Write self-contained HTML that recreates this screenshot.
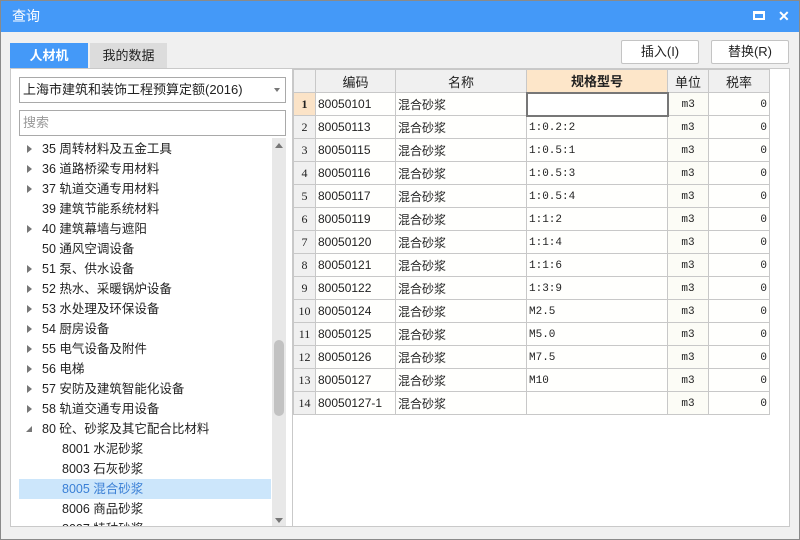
<!DOCTYPE html>
<html><head><meta charset="utf-8"><style>
*{margin:0;padding:0;box-sizing:border-box}
body{width:800px;height:540px;background:#f0f0f0;font-family:"Liberation Sans","Noto Sans CJK SC",sans-serif;font-size:12px;color:#222;position:relative;overflow:hidden}
.abs{position:absolute}
.frame{left:0;top:0;width:800px;height:540px;border:1px solid #8a8a8a;pointer-events:none}
.title{left:0;top:0;width:800px;height:32px;background:#4499f8;color:#fff;font-size:14px;line-height:32px;padding-left:12px}
.tab{top:43px;height:25px;line-height:25px;text-align:center;font-size:13px}
.left{left:10px;top:68px;width:283px;height:459px;background:#fff;border:1px solid #c9c9c9}
.inp{left:19px;width:267px;height:26px;border:1px solid #a9a9a9;background:#fff;line-height:24px;padding-left:3px;font-size:13px}
.tree>div{position:absolute;left:0;height:20px;line-height:20px;font-size:12.5px;width:252px}
.tri{position:absolute;left:8px;top:6px;width:0;height:0;border-left:5px solid #777;border-top:4px solid transparent;border-bottom:4px solid transparent}
.right{left:292px;top:68px;width:498px;height:459px;background:#fff;border:1px solid #c9c9c9}
.btn{top:40px;width:78px;height:24px;border:1px solid #c4c4c4;background:#fff;text-align:center;line-height:22px;font-size:13px;border-radius:2px}
table{position:absolute;left:0;top:0;border-collapse:collapse;table-layout:fixed}
td,th{border:1px solid #c8c8c8;height:23px;font-weight:normal;font-size:12px;white-space:nowrap;overflow:hidden;padding:0 2px;vertical-align:middle}
th{background:#f0f0f0;font-size:13px;height:23px}
td.n{background:#f0f0f0;text-align:center;font-family:"Liberation Serif",serif}
td.m{font-family:"Liberation Mono",monospace;font-size:11px;padding-top:2px}
td.u{background:#fcfcf6;text-align:center;font-family:"Liberation Mono",monospace;font-size:11px;padding-top:2px}
td.r{text-align:right;font-family:"Liberation Mono",monospace;font-size:11px;padding-top:2px}
td{background:#fffffd}
</style></head><body>
<div class="abs title">查询
<div class="abs" style="left:753px;top:11px;width:12px;height:9px;border:2px solid #fff;border-top-width:3px"></div>
<div class="abs" style="left:778px;top:0;font-size:14px;font-weight:bold">✕</div>
</div>
<div class="abs tab" style="left:10px;width:78px;background:#4499f8;color:#fff;font-weight:bold">人材机</div>
<div class="abs tab" style="left:90px;width:77px;background:#dcdcdc;">我的数据</div>
<div class="abs btn" style="left:621px">插入(I)</div>
<div class="abs btn" style="left:711px">替换(R)</div>
<div class="abs left"></div>
<div class="abs inp" style="top:77px">上海市建筑和装饰工程预算定额(2016)<span class="abs" style="right:5px;top:10px;border-top:4px solid #777;border-left:3px solid transparent;border-right:3px solid transparent"></span></div>
<div class="abs inp" style="top:110px;color:#999">搜索</div>
<div class="abs" style="left:272px;top:138px;width:14px;height:388px;background:#e8e8e8"></div>
<div class="abs" style="left:274px;top:340px;width:10px;height:76px;background:#c2c2c2;border-radius:5px"></div>
<div class="abs" style="left:275px;top:143px;border-bottom:5px solid #777;border-left:4px solid transparent;border-right:4px solid transparent"></div>
<div class="abs" style="left:275px;top:518px;border-top:5px solid #777;border-left:4px solid transparent;border-right:4px solid transparent"></div>
<div class="abs tree" style="left:19px;top:139px;width:253px;height:387px;overflow:hidden">
<div style="top:0"><span class="tri"></span><span style="margin-left:23px">35 周转材料及五金工具</span></div>
<div style="top:20px"><span class="tri"></span><span style="margin-left:23px">36 道路桥梁专用材料</span></div>
<div style="top:40px"><span class="tri"></span><span style="margin-left:23px">37 轨道交通专用材料</span></div>
<div style="top:60px"><span style="margin-left:23px">39 建筑节能系统材料</span></div>
<div style="top:80px"><span class="tri"></span><span style="margin-left:23px">40 建筑幕墙与遮阳</span></div>
<div style="top:100px"><span style="margin-left:23px">50 通风空调设备</span></div>
<div style="top:120px"><span class="tri"></span><span style="margin-left:23px">51 泵、供水设备</span></div>
<div style="top:140px"><span class="tri"></span><span style="margin-left:23px">52 热水、采暖锅炉设备</span></div>
<div style="top:160px"><span class="tri"></span><span style="margin-left:23px">53 水处理及环保设备</span></div>
<div style="top:180px"><span class="tri"></span><span style="margin-left:23px">54 厨房设备</span></div>
<div style="top:200px"><span class="tri"></span><span style="margin-left:23px">55 电气设备及附件</span></div>
<div style="top:220px"><span class="tri"></span><span style="margin-left:23px">56 电梯</span></div>
<div style="top:240px"><span class="tri"></span><span style="margin-left:23px">57 安防及建筑智能化设备</span></div>
<div style="top:260px"><span class="tri"></span><span style="margin-left:23px">58 轨道交通专用设备</span></div>
<div style="top:280px"><span class="abs" style="left:7px;top:7px;border-bottom:6px solid #777;border-left:6px solid transparent"></span><span style="margin-left:23px">80 砼、砂浆及其它配合比材料</span></div>
<div style="top:300px"><span style="margin-left:43px">8001 水泥砂浆</span></div>
<div style="top:320px"><span style="margin-left:43px">8003 石灰砂浆</span></div>
<div style="top:340px;background:#cce6fb;color:#3a7fd5"><span style="margin-left:43px">8005 混合砂浆</span></div>
<div style="top:360px"><span style="margin-left:43px">8006 商品砂浆</span></div>
<div style="top:380px"><span style="margin-left:43px">8007 特种砂浆</span></div>
</div>
<div class="abs right">
<table>
<colgroup><col style="width:22px"><col style="width:80px"><col style="width:131px"><col style="width:141px"><col style="width:41px"><col style="width:61px"></colgroup>
<tr><th></th><th>编码</th><th>名称</th><th style="background:#fde6c9;font-weight:bold">规格型号</th><th>单位</th><th>税率</th></tr>
<tr><td class="n" style="background:#fbe3c7;font-weight:bold">1</td><td>80050101</td><td>混合砂浆</td><td style="border:2px solid #777;background:#fff"></td><td class="u">m3</td><td class="r">0</td></tr>
<tr><td class="n">2</td><td>80050113</td><td>混合砂浆</td><td class="m">1:0.2:2</td><td class="u">m3</td><td class="r">0</td></tr>
<tr><td class="n">3</td><td>80050115</td><td>混合砂浆</td><td class="m">1:0.5:1</td><td class="u">m3</td><td class="r">0</td></tr>
<tr><td class="n">4</td><td>80050116</td><td>混合砂浆</td><td class="m">1:0.5:3</td><td class="u">m3</td><td class="r">0</td></tr>
<tr><td class="n">5</td><td>80050117</td><td>混合砂浆</td><td class="m">1:0.5:4</td><td class="u">m3</td><td class="r">0</td></tr>
<tr><td class="n">6</td><td>80050119</td><td>混合砂浆</td><td class="m">1:1:2</td><td class="u">m3</td><td class="r">0</td></tr>
<tr><td class="n">7</td><td>80050120</td><td>混合砂浆</td><td class="m">1:1:4</td><td class="u">m3</td><td class="r">0</td></tr>
<tr><td class="n">8</td><td>80050121</td><td>混合砂浆</td><td class="m">1:1:6</td><td class="u">m3</td><td class="r">0</td></tr>
<tr><td class="n">9</td><td>80050122</td><td>混合砂浆</td><td class="m">1:3:9</td><td class="u">m3</td><td class="r">0</td></tr>
<tr><td class="n">10</td><td>80050124</td><td>混合砂浆</td><td class="m">M2.5</td><td class="u">m3</td><td class="r">0</td></tr>
<tr><td class="n">11</td><td>80050125</td><td>混合砂浆</td><td class="m">M5.0</td><td class="u">m3</td><td class="r">0</td></tr>
<tr><td class="n">12</td><td>80050126</td><td>混合砂浆</td><td class="m">M7.5</td><td class="u">m3</td><td class="r">0</td></tr>
<tr><td class="n">13</td><td>80050127</td><td>混合砂浆</td><td class="m">M10</td><td class="u">m3</td><td class="r">0</td></tr>
<tr><td class="n">14</td><td>80050127-1</td><td>混合砂浆</td><td class="m"></td><td class="u">m3</td><td class="r">0</td></tr>
</table>
</div>
<div class="abs frame"></div>
</body></html>
